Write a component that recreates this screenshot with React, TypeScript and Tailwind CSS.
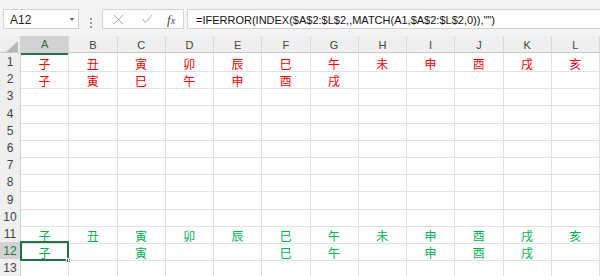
import React from 'react';

const cols = ['A', 'B', 'C', 'D', 'E', 'F', 'G', 'H', 'I', 'J', 'K', 'L'];
const branches = ['子', '丑', '寅', '卯', '辰', '巳', '午', '未', '申', '酉', '戌', '亥'];

// row number -> cell values (12 columns), plus colour
const rows: { n: number; cells: string[]; color?: 'red' | 'green' }[] = [
  { n: 1, cells: branches, color: 'red' },
  { n: 2, cells: ['子', '寅', '巳', '午', '申', '酉', '戌', '', '', '', '', ''], color: 'red' },
  { n: 3, cells: [] },
  { n: 4, cells: [] },
  { n: 5, cells: [] },
  { n: 6, cells: [] },
  { n: 7, cells: [] },
  { n: 8, cells: [] },
  { n: 9, cells: [] },
  { n: 10, cells: [] },
  { n: 11, cells: branches, color: 'green' },
  { n: 12, cells: ['子', '', '寅', '', '', '巳', '午', '', '申', '酉', '戌', ''], color: 'green' },
  { n: 13, cells: [] },
];

const gridCols = 'grid grid-cols-[21px_repeat(12,minmax(0,1fr))]';

export default function App() {
  return (
    <div className="w-[600px] h-[276px] overflow-hidden bg-white font-['Liberation_Sans',sans-serif]">
      {/* formula bar */}
      <div className="h-[36px] bg-[#f3f3f3] pt-[9px] flex">
        <div className="ml-[3px] w-[76px] h-[20px] bg-white border border-[#d4d4d4] flex items-center justify-between pl-[6px] pr-[4px]">
          <span className="text-[12px] text-[#222] leading-none pt-[2px]">A12</span>
          <span className="w-0 h-0 border-l-[2px] border-r-[2px] border-t-[3px] border-l-transparent border-r-transparent border-t-[#555]" />
        </div>
        <div className="w-[23px] flex flex-col items-center justify-center gap-[2px]">
          <span className="w-[2px] h-[2px] bg-[#9a9a9a]" />
          <span className="w-[2px] h-[2px] bg-[#9a9a9a]" />
          <span className="w-[2px] h-[2px] bg-[#9a9a9a]" />
        </div>
        <div className="w-[82px] h-[20px] bg-white border border-[#d4d4d4] flex items-center">
          <svg width="11" height="11" viewBox="0 0 11 11" className="ml-[10px]">
            <path d="M1 1 L10 10 M10 1 L1 10" stroke="#ababab" strokeWidth="1" fill="none" />
          </svg>
          <svg width="12" height="10" viewBox="0 0 12 10" className="ml-[17px]">
            <path d="M1 5 L4.5 8.5 L11 1" stroke="#ababab" strokeWidth="1" fill="none" />
          </svg>
          <span className="ml-[14px] text-[13px] italic text-[#444] font-['Liberation_Serif',serif] leading-none">
            f<span className="text-[10px]">x</span>
          </span>
        </div>
        <div className="ml-[3px] flex-1 h-[20px] bg-white border border-r-0 border-[#d4d4d4] flex items-center pl-[8px]">
          <span className="text-[11px] text-[#111] leading-none pt-[2px] whitespace-nowrap">
            =IFERROR(INDEX($A$2:$L$2,,MATCH(A1,$A$2:$L$2,0)),"")
          </span>
        </div>
      </div>

      {/* column headers */}
      <div className={`${gridCols} h-[17px] bg-[#efefef] border-b border-[#c8c8c8]`}>
        <div className="flex items-end justify-end pr-[2px] pb-[2px] border-r border-[#d0d0d0]">
          <svg width="12" height="11" viewBox="0 0 12 11">
            <path d="M12 0 L12 11 L0 11 Z" fill="#b8b8b8" />
          </svg>
        </div>
        {cols.map((c) => (
          <div
            key={c}
            className={`flex items-center justify-center text-[11px] border-r border-[#d8d8d8] ${
              c === 'A' ? 'bg-[#d2d2d2] text-[#217346] border-b-2 border-b-[#217346] -mb-px' : 'text-[#444]'
            }`}
          >
            {c}
          </div>
        ))}
      </div>

      {/* rows */}
      {rows.map((r) => (
        <div key={r.n} className={`${gridCols} h-[17.2px]`}>
          <div
            className={`flex items-center justify-center text-[12px] border-r border-b border-[#d0d0d0] ${
              r.n === 12 ? 'bg-[#d2d2d2] text-[#217346]' : 'bg-[#efefef] text-[#444]'
            }`}
          >
            {r.n}
          </div>
          {cols.map((c, i) => {
            const v = r.cells[i] || '';
            const selected = r.n === 12 && c === 'A';
            return (
              <div
                key={c}
                className={`relative flex items-end justify-center pb-[1px] text-[12px] leading-none font-['Noto_Sans_CJK_TC',sans-serif] border-r border-b border-[#e1e1e1] ${
                  r.color === 'red' ? 'text-[#ff0000]' : 'text-[#00b050]'
                }`}
              >
                {v}
                {selected && (
                  <>
                    <span className="absolute -left-px -top-px -right-px -bottom-px border-2 border-[#217346]" />
                    <span className="absolute -right-[3px] -bottom-[3px] w-[5px] h-[5px] bg-[#217346] border border-white" />
                  </>
                )}
              </div>
            );
          })}
        </div>
      ))}
    </div>
  );
}
